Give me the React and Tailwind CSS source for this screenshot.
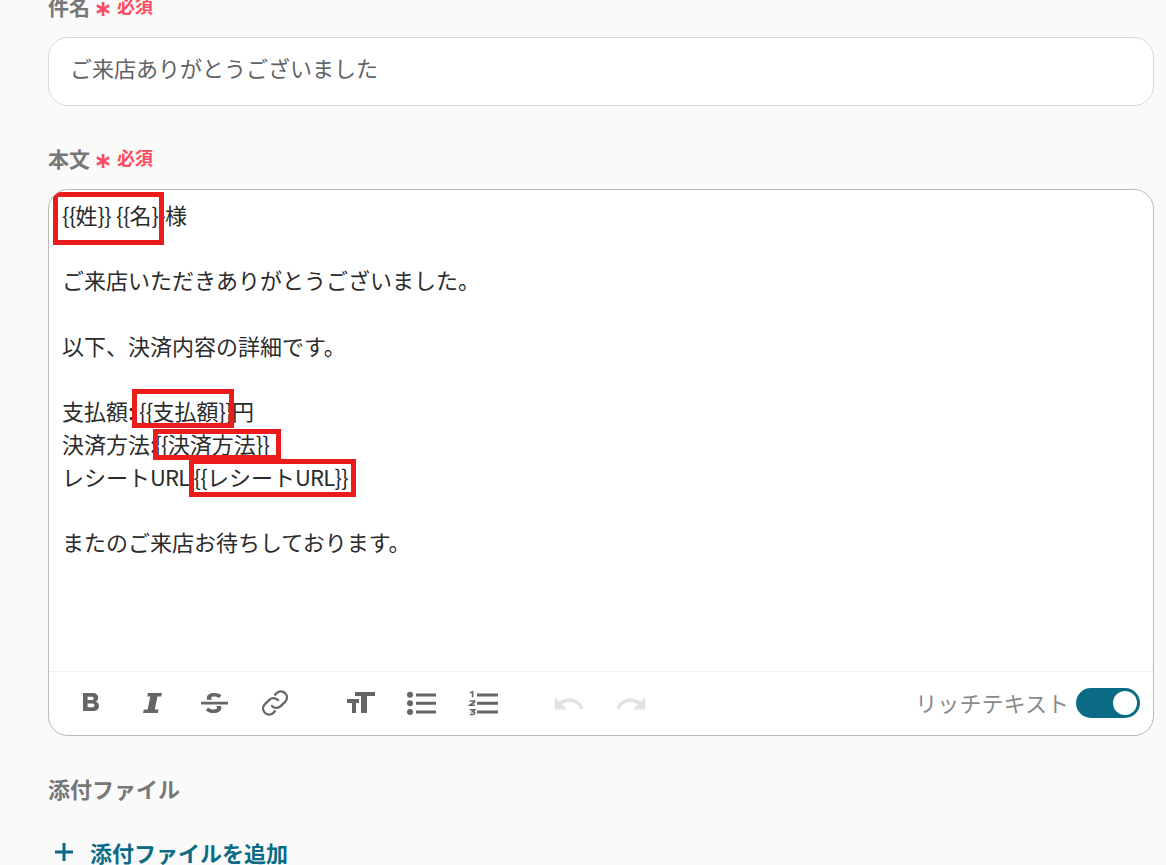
import React from "react";

const FONT = "font-['Noto_Sans_CJK_JP','Noto_Sans',sans-serif]";

function RequiredMark() {
  return (
    <span className="flex items-center gap-[7px] text-[#ff4a5f]">
      <svg width="14" height="14" viewBox="0 0 14 14" className="mt-[5px]" stroke="currentColor" strokeWidth="2.6" fill="none">
        <path d="M7 0V14M0.8 3.4L13.2 10.600M13.2 3.400L0.8 10.600" />
      </svg>
      <span className="text-[18px] leading-[20px] font-bold mb-[2px]">必須</span>
    </span>
  );
}

function Label({ text, required, size = "text-[21px]" }) {
  return (
    <div className="flex items-center gap-[6px] h-[24px]">
      <span className={"leading-[24px] font-bold text-[#777777] " + size}>{text}</span>
      {required && <RequiredMark />}
    </div>
  );
}

function ToolIcon({ children }) {
  return (
    <svg width="32" height="32" viewBox="0 0 32 32" className="shrink-0" fill="#666666">
      {children}
    </svg>
  );
}

const UNDO_PATH =
  "M12.5 8c-2.65 0-5.05.99-6.9 2.6L2 7v9h9l-3.62-3.62c1.39-1.16 3.16-1.88 5.12-1.88 3.54 0 6.55 2.31 7.6 5.5l2.37-.78C21.08 11.03 17.15 8 12.5 8z";

function Toolbar() {
  return (
    <div className="h-[64px] border-t border-[#f0f0f0] flex items-center pl-[26px] pr-[13px] pb-[2px]">
      <div className="flex items-center gap-[29.300px]">
        <ToolIcon>
          <path fillRule="evenodd" d="M8 6h9.500c3.600 0 5.700 1.900 5.700 4.700 0 1.900-1 3.200-2.500 3.900 2 .6 3.300 2.200 3.300 4.400 0 3.200-2.400 5-6 5H8V6zm4.600 3.800v3.300h4.100c1.200 0 1.900-.6 1.900-1.700s-.7-1.600-1.900-1.600h-4.100zm0 6.800v3.600h4.700c1.400 0 2.100-.7 2.100-1.800s-.7-1.800-2.100-1.800h-4.700z" />
        </ToolIcon>
        <ToolIcon>
          <path d="M12 6h14l-.8 3.600h-3.800l-2.600 12.800h3.800L21.800 26H7l.8-3.600h3.800L14.200 9.600h-3z" />
        </ToolIcon>
        <ToolIcon>
          <path d="M3 14.800h27v2.600H3z" />
          <path d="M9.200 13.300c-.3-.7-.4-1.400-.4-2.200C8.800 8 11.800 6 16 6c3 0 5.400.8 7.400 2.100l-2 3c-1.600-.9-3.400-1.500-5.300-1.500-1.900 0-3 .6-3 1.500 0 .8.7 1.300 2 1.700H9.200z" />
          <path d="M23 19c.2.500.3 1.100.3 1.700 0 3.200-2.900 5.300-7.400 5.300-3.200 0-6-.9-8-2.600l2.100-3c1.700 1.300 3.700 2.100 5.800 2.100 2.100 0 3.300-.6 3.300-1.700 0-.8-.5-1.300-1.300-1.800H23z" />
        </ToolIcon>
        <ToolIcon>
          <g fill="none" stroke="#666666" strokeWidth="2" strokeLinecap="round" transform="translate(16 16) scale(1.180) translate(-16 -16)">
            <path d="M13.500 18.500a5 5 0 0 0 7.300.2l4-4a5.100 5.100 0 0 0-7.200-7.200l-1.500 1.500" />
            <path d="M18.500 13.500a5 5 0 0 0-7.300-.2l-4 4a5.100 5.100 0 0 0 7.200 7.200l1.500-1.500" />
          </g>
        </ToolIcon>
      </div>
      <div className="flex items-center gap-[29.500px] ml-[54px]">
        <ToolIcon>
          <path d="M10 5h20v4h-8v17h-6V9h-6z" />
          <path d="M2 12h12v4h-3v10H7V16H2z" />
        </ToolIcon>
        <ToolIcon>
          <circle cx="4" cy="7.800" r="3" />
          <circle cx="4" cy="16.300" r="3" />
          <circle cx="4" cy="25" r="3" />
          <path d="M10 6.500h20v3H10zM10 14.800h20v3H10zM10 23.500h20v3H10z" />
        </ToolIcon>
        <ToolIcon>
          <path d="M9 6.500h21v3H9zM9 14.800h21v3H9zM9 23.500h21v3H9z" />
          <g fill="none" stroke="#666666" strokeWidth="1.600">
            <path d="M2 5.800l2.600-1v5.400" />
            <path d="M1.800 14h4.800v1L2 18.200h4.800" />
            <path d="M1.800 22.800h4.800l-2.200 2c1.800 0 2.500.5 2.500 1.300s-1 1.600-5 1.300" />
          </g>
        </ToolIcon>
      </div>
      <div className="flex items-center gap-[30px] ml-[53.500px]">
        <ToolIcon>
          <path fill="#e2e2e2" transform="translate(-1 0) scale(1.400)" d={UNDO_PATH} />
        </ToolIcon>
        <ToolIcon>
          <path fill="#e2e2e2" transform="translate(33 0) scale(-1.400 1.400)" d={UNDO_PATH} />
        </ToolIcon>
      </div>
      <div className="ml-auto flex items-center gap-[7px]">
        <span className="text-[22px] leading-[30px] text-[#8a8a8a] tracking-[0.05px] mb-[2px]">リッチテキスト</span>
        <div className="w-[64px] h-[30px] rounded-full bg-[#0b6b85] flex items-center justify-end pr-[3px]">
          <div className="w-[24px] h-[24px] rounded-full bg-white" />
        </div>
      </div>
    </div>
  );
}

const BODY_LINES = [
  "{{姓}} {{名}}様",
  "",
  "ご来店いただきありがとうございました。",
  "",
  "以下、決済内容の詳細です。",
  "",
  "支払額: {{支払額}}円",
  "決済方法:{{決済方法}}",
  "レシートURL:{{レシートURL}}",
  "",
  "またのご来店お待ちしております。",
];

// 赤枠は本文の上に重ねる注釈
const HIGHLIGHTS = [
  "left-[4px] top-[2px] w-[111px] h-[53px]",
  "left-[83px] top-[199px] w-[102px] h-[39px]",
  "left-[104px] top-[239px] w-[128px] h-[31px]",
  "left-[140px] top-[269px] w-[167px] h-[38px]",
];

// 括弧・URL・コロンは参照より幅が広いので少し詰める
function BodyLine({ line }) {
  const parts = line.split(/(\{\{|\}\}|URL|:(?=\{))/);
  return (
    <div className="h-[32.800px] whitespace-pre">
      {parts.map((part, i) => {
        if (part === "{{" || part === "}}") return <span key={i} className="tracking-[-0.7px]">{part}</span>;
        if (part === "URL") return <span key={i} className="tracking-[-0.8px]">{part}</span>;
        if (part === ":") return <span key={i} className="tracking-[-2px]">{part}</span>;
        return part;
      })}
    </div>
  );
}

export default function App() {
  return (
    <div className={"w-[1166px] h-[865px] overflow-hidden bg-[#fafafa] pl-[48px] pr-[12px] " + FONT}>
      <div className="-mt-[6px]">
        <Label text="件名" required />
      </div>
      <div className="mt-[19px] h-[69px] rounded-[20px] border border-[#d5d8de] bg-white flex items-center pl-[21px] pb-[8px] text-[22px] text-[#5f6368]">
        ご来店ありがとうございました
      </div>
      <div className="mt-[40px]">
        <Label text="本文" required />
      </div>
      <div className="relative mt-[19px] h-[547px] rounded-[20px] border border-[#b9b9b9] bg-white flex flex-col overflow-hidden">
        <div className="flex-1 pl-[13px] pt-[7.500px] text-[22px] leading-[32.800px] text-[#2b2b2b]">
          {BODY_LINES.map((line, i) => (
            <BodyLine key={i} line={line} />
          ))}
        </div>
        <Toolbar />
        {HIGHLIGHTS.map((pos) => (
          <div key={pos} className={"absolute border-[5px] border-[#ec1c1c] " + pos} />
        ))}
      </div>
      <div className="mt-[40px]">
        <Label text="添付ファイル" size="text-[22px]" />
      </div>
      <div className="mt-[36px] flex items-center gap-[14px] pl-[4px] text-[#0b6b85]">
        <svg width="24" height="24" viewBox="0 0 24 24" fill="none" stroke="currentColor" strokeWidth="3">
          <path d="M12 3V21M3 12H21" />
        </svg>
        <span className="text-[22px] leading-[32px] font-bold">添付ファイルを追加</span>
      </div>
    </div>
  );
}
